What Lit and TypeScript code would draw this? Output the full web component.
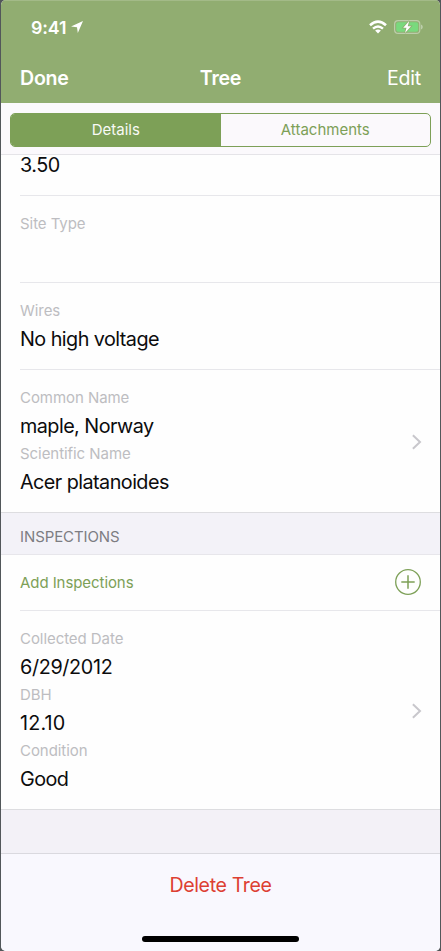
import { LitElement, html, css } from "lit";
import { customElement, property, state } from "lit/decorators.js";
import { classMap } from "lit/directives/class-map.js";

interface Field {
  label: string;
  value: string;
}

const chevron = html`<svg width="10" height="16" viewBox="0 0 10 16" fill="none">
  <path d="M0.9 1.3 L8 8 L0.9 14.7" stroke="#c8c7cc" stroke-width="2" />
</svg>`;

@customElement("record-row")
class RecordRow extends LitElement {
  @property({ attribute: false }) fields: Field[] = [];
  @property({ type: Boolean }) link = false;
  @property({ type: Boolean }) last = false;

  static styles = css`
    :host { display: block; }
    .row {
      display: flex;
      align-items: center;
      justify-content: space-between;
      margin-left: 19px;
      padding: 14px 18px 16px 0;
      border-bottom: 1px solid #e7e7eb;
    }
    .row.last { margin-left: 0; padding-left: 19px; border-color: #dddde0; }
    .label, .value { height: 28px; line-height: 28px; white-space: nowrap; }
    .label { font-size: 15px; color: #bdbdc1; letter-spacing: -0.06px; }
    .value { font-size: 19.8px; color: #0c0c0d; letter-spacing: -0.55px; line-height: 29px; }
    .value.numeric { letter-spacing: -0.35px; }
    .value.decimal { letter-spacing: 0.15px; }
    svg { display: block; margin-top: 3px; }
  `;

  render() {
    return html`<div class=${classMap({ row: true, last: this.last })}>
      <div>
        ${this.fields.map(
          (f) => html`<div class="label">${f.label}</div>
            <div class=${classMap({
              value: true,
              numeric: /^\d+\//.test(f.value),
              decimal: /^\d+\./.test(f.value),
            })}>${f.value}</div>`
        )}
      </div>
      ${this.link ? chevron : ""}
    </div>`;
  }
}

@customElement("app-root")
class AppRoot extends LitElement {
  @state() private tab = 0;

  static styles = css`
    :host {
      display: block;
      height: 951px;
      background: #52575a;
      font-family: Inter, "Liberation Sans", sans-serif;
    }
    .screen {
      box-sizing: border-box;
      height: 951px;
      margin: 0 1px;
      display: flex;
      flex-direction: column;
      overflow: hidden;
      border-radius: 5px;
      background: #fefefe;
    }
    .header {
      height: 103px;
      box-sizing: border-box;
      background: #91ad71;
      border-top: 1px solid #a3ba88;
      color: #fff;
      flex: none;
    }
    .status {
      display: flex;
      align-items: center;
      height: 52px;
      padding: 0 17px 0 30px;
    }
    .time { font-size: 17.8px; font-weight: 600; letter-spacing: -0.1px; line-height: 22px; padding-top: 1px; }
    .arrow { margin-left: 5px; }
    .wifi { margin-left: auto; margin-right: 7px; }
    .nav {
      display: grid;
      grid-template-columns: 1fr auto 1fr;
      height: 50px;
      line-height: 51px;
      padding: 0 19px;
      font-size: 19.6px;
      font-weight: 600;
      letter-spacing: -0.25px;
    }
    .edit { text-align: right; font-weight: 400; }
    .tabs {
      flex: none;
      box-sizing: border-box;
      height: 52px;
      padding: 10px 9px 7px;
      background: #fbf9fc;
      border-bottom: 1px solid #e5e4e8;
    }
    .segments {
      display: flex;
      box-sizing: border-box;
      height: 34px;
      border: 1px solid #7da057;
      border-radius: 5px;
      overflow: hidden;
    }
    .segment {
      flex: 1;
      text-align: center;
      line-height: 32px;
      font-size: 15px;
      color: #7da057;
    }
    .segment.on { background: #7da057; color: #f8faf5; }
    .partial {
      height: 40px;
      margin-left: 19px;
      border-bottom: 1px solid #e7e7eb;
      flex: none;
      font-size: 19.8px;
      letter-spacing: -0.5px;
      line-height: 20px;
      color: #0c0c0d;
    }
    .section {
      box-sizing: border-box;
      height: 42px;
      padding: 4px 19px 0;
      line-height: 39px;
      background: #f3f2f8;
      border-bottom: 1px solid #e7e6eb;
      font-size: 15px;
      letter-spacing: -0.1px;
      color: #7d7d82;
      flex: none;
    }
    .add {
      display: flex;
      align-items: center;
      justify-content: space-between;
      box-sizing: border-box;
      height: 56px;
      margin-left: 19px;
      padding: 0 19px 1px 0;
      border-bottom: 1px solid #e7e7eb;
      font-size: 15px;
      letter-spacing: -0.07px;
      color: #7da057;
      flex: none;
    }
    .gap { flex: 1; background: #f3f1f7; }
    .footer {
      flex: none;
      display: flex;
      flex-direction: column;
      align-items: center;
      box-sizing: border-box;
      height: 98px;
      border-top: 1px solid #dad9df;
      background: #f9f8fe;
    }
    .delete { line-height: 63px; font-size: 19.6px; letter-spacing: -0.38px; color: #dd4032; }
    .home { width: 157px; height: 6px; margin-top: 18.5px; border-radius: 3px; background: #000; }
    svg { display: block; }
  `;

  render() {
    return html`<div class="screen">
      <div class="header">
        <div class="status">
          <span class="time">9:41</span>
          <svg class="arrow" width="12" height="12" viewBox="0 0 12 12">
            <path d="M12 0 L6.8 12 L6 6.2 L0 5.5 Z" fill="#fff" />
          </svg>
          <svg class="wifi" width="18" height="14" viewBox="0 0 18 14" fill="#fff">
            <path d="M9 13.5 L6.1 10.6 Q9 8.4 11.9 10.6 Z" />
            <path d="M4 8.6 Q9 4.2 14 8.6" fill="none" stroke="#fff" stroke-width="2.4" />
            <path d="M1 5.2 Q9 -1.9 17 5.2" fill="none" stroke="#fff" stroke-width="2.6" />
          </svg>
          <svg width="29" height="14" viewBox="0 0 29 14">
            <rect x="0.6" y="0.6" width="25.2" height="12.8" rx="3.5" fill="none" stroke="#bccdaa" stroke-width="1.2" />
            <rect x="2.2" y="2.2" width="22" height="9.6" rx="2" fill="#79d97d" />
            <path d="M27 4.6 Q28.8 5.3 28.8 7 Q28.8 8.7 27 9.4 Z" fill="#bccdaa" />
            <path d="M15.2 1 L9.2 7.7 L12.5 7.7 L11 13 L17 6.2 L13.7 6.2 Z" fill="#fff" stroke="#91ad71" stroke-width="1.6" paint-order="stroke" />
          </svg>
        </div>
        <div class="nav">
          <span>Done</span><span>Tree</span><span class="edit">Edit</span>
        </div>
      </div>
      <div class="tabs">
        <div class="segments">
          ${["Details", "Attachments"].map(
            (name, i) => html`<div
              class=${classMap({ segment: true, on: this.tab === i })}
              @click=${() => (this.tab = i)}
            >${name}</div>`
          )}
        </div>
      </div>
      <div class="partial">3.50</div>
      <record-row .fields=${[{ label: "Site Type", value: "" }]}></record-row>
      <record-row .fields=${[{ label: "Wires", value: "No high voltage" }]}></record-row>
      <record-row link last .fields=${[
        { label: "Common Name", value: "maple, Norway" },
        { label: "Scientific Name", value: "Acer platanoides" },
      ]}></record-row>
      <div class="section">INSPECTIONS</div>
      <div class="add">
        <span>Add Inspections</span>
        <svg width="26" height="26" viewBox="0 0 26 26" fill="none" stroke="#7da057">
          <circle cx="13" cy="13" r="12.3" stroke-width="1.3" />
          <path d="M13 6.3 V19.7 M6.3 13 H19.7" stroke-width="1.5" />
        </svg>
      </div>
      <record-row link last .fields=${[
        { label: "Collected Date", value: "6/29/2012" },
        { label: "DBH", value: "12.10" },
        { label: "Condition", value: "Good" },
      ]}></record-row>
      <div class="gap"></div>
      <div class="footer">
        <div class="delete">Delete Tree</div>
        <div class="home"></div>
      </div>
    </div>`;
  }
}
